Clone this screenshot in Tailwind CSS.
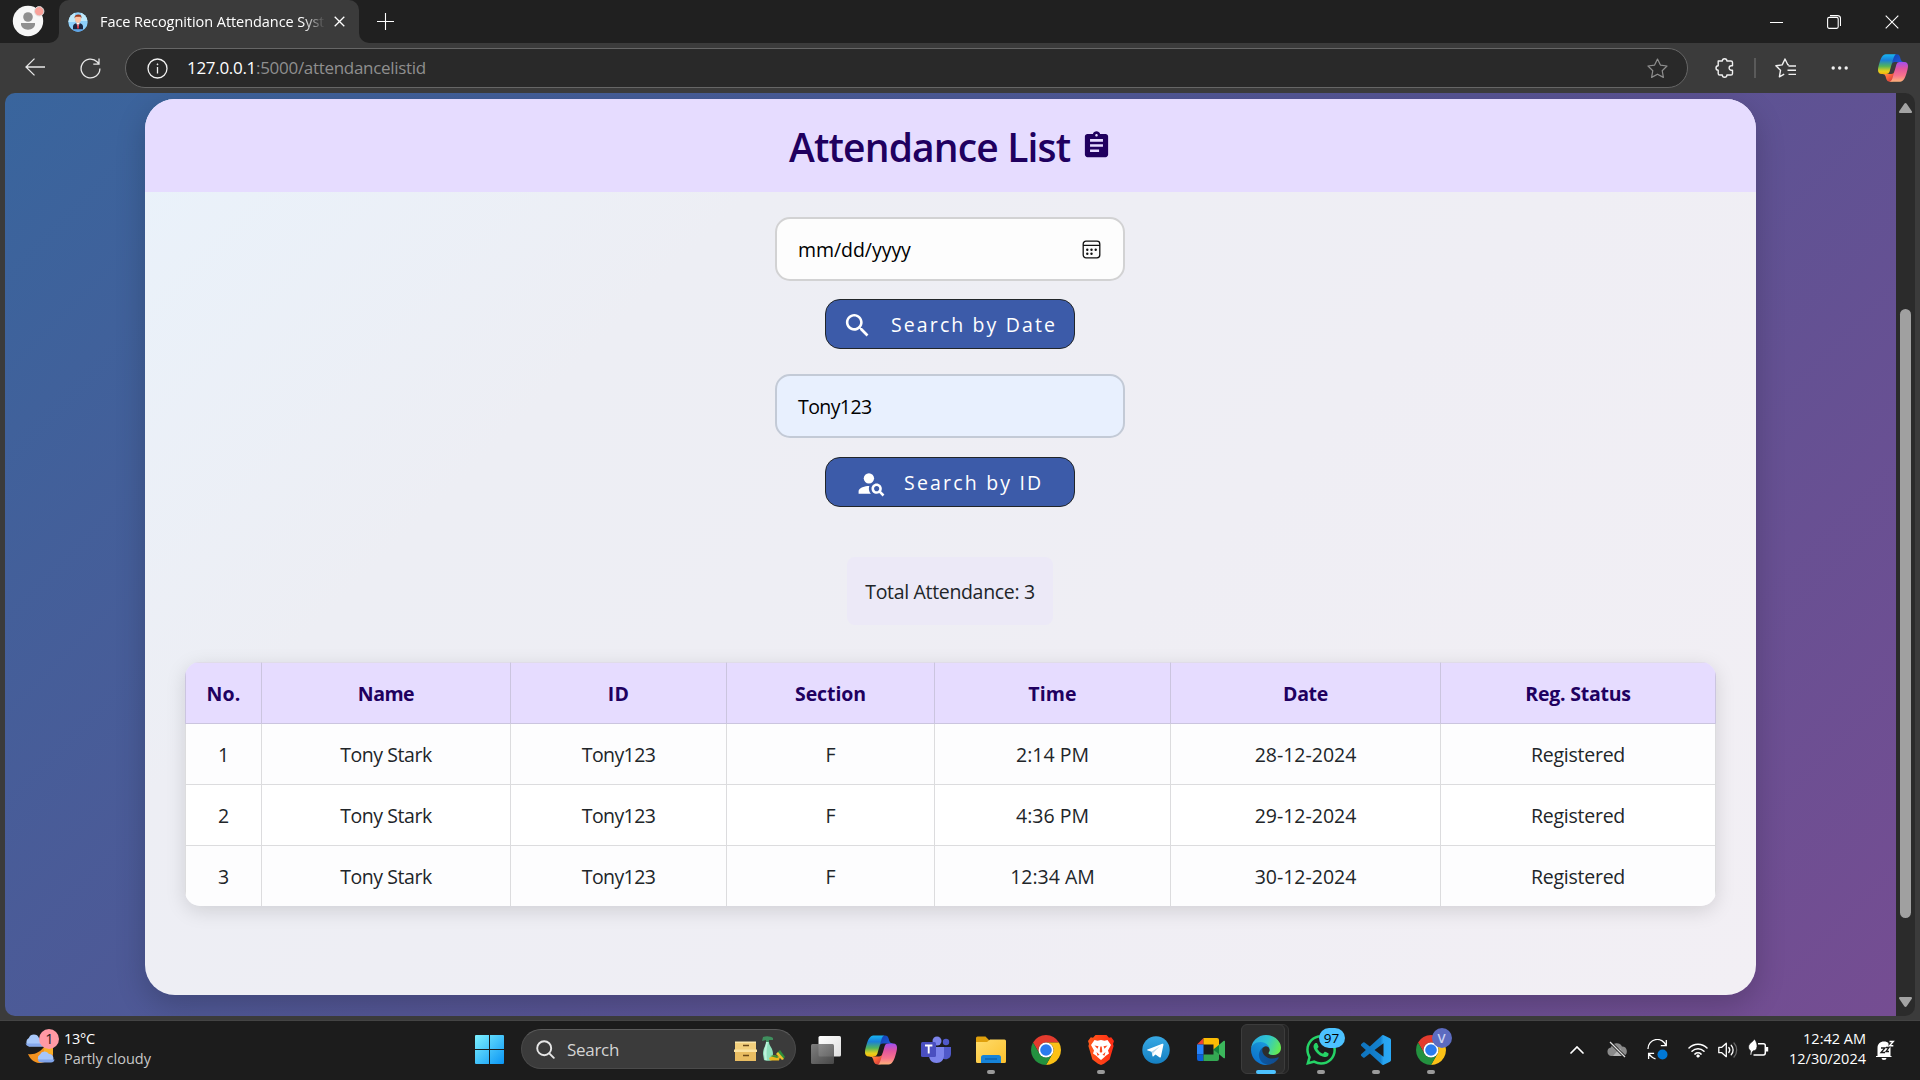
<!DOCTYPE html>
<html lang="en">
<head>
<meta charset="utf-8">
<title>Face Recognition Attendance System</title>
<script src="https://cdn.jsdelivr.net/npm/@tailwindcss/browser@4"></script>
</head>
<body class="w-[1920px] h-[1080px] overflow-hidden bg-[#3b3b3b] font-['Open_Sans',sans-serif] flex flex-col">

<!-- Shared gradients and logos -->
<svg class="absolute w-0 h-0" aria-hidden="true">
  <defs>
    <linearGradient id="cpA" x1="0" y1="0" x2="0" y2="1"><stop offset="0" stop-color="#18b5f2"/><stop offset=".3" stop-color="#1a7fd8"/><stop offset=".6" stop-color="#52b45a"/><stop offset=".85" stop-color="#e8cf1c"/><stop offset="1" stop-color="#f6b60c"/></linearGradient>
    <linearGradient id="cpB" x1="0" y1="0" x2="0" y2="1"><stop offset="0" stop-color="#a24ff0"/><stop offset=".35" stop-color="#e2569e"/><stop offset=".7" stop-color="#f8738c"/><stop offset="1" stop-color="#fdb27a"/></linearGradient>
    <linearGradient id="cpC" x1="0" y1="0" x2="1" y2="1"><stop offset="0" stop-color="#0f3fae"/><stop offset="1" stop-color="#2764e7"/></linearGradient>
    <linearGradient id="cpD" x1="0" y1="0" x2="1" y2="1"><stop offset="0" stop-color="#ffb657"/><stop offset=".5" stop-color="#ff6a3c"/><stop offset="1" stop-color="#c02b3c"/></linearGradient>
    <linearGradient id="edA" x1="0" y1="0" x2="1" y2="0"><stop offset="0" stop-color="#0c59a4"/><stop offset="1" stop-color="#114a8b"/></linearGradient>
    <linearGradient id="edB" x1=".8" y1="0" x2=".3" y2="1"><stop offset="0" stop-color="#1b9de2"/><stop offset=".5" stop-color="#1384cf"/><stop offset="1" stop-color="#0a6fd0"/></linearGradient>
    <linearGradient id="edC" x1="0" y1=".3" x2="1" y2=".6"><stop offset="0" stop-color="#2aa9e0"/><stop offset=".5" stop-color="#2fc6cf"/><stop offset="1" stop-color="#66eb4e"/></linearGradient>
    <linearGradient id="win" x1="0" y1="0" x2="1" y2="1"><stop offset="0" stop-color="#7df1ff"/><stop offset="1" stop-color="#0a95f5"/></linearGradient>
    <linearGradient id="fold" x1="0" y1="0" x2="1" y2="1"><stop offset="0" stop-color="#ffdc6b"/><stop offset="1" stop-color="#fbc02d"/></linearGradient>
    <linearGradient id="tg" x1="0" y1="0" x2="0" y2="1"><stop offset="0" stop-color="#38a9e4"/><stop offset="1" stop-color="#1580c2"/></linearGradient>
    <linearGradient id="br" x1="0" y1="0" x2="1" y2="0"><stop offset="0" stop-color="#ff5a1c"/><stop offset="1" stop-color="#ff2a14"/></linearGradient>
    <linearGradient id="vs" x1="0" y1="0" x2="1" y2="0"><stop offset="0" stop-color="#0f73bd"/><stop offset=".65" stop-color="#1482cf"/><stop offset=".75" stop-color="#27a3f0"/><stop offset="1" stop-color="#2aa8f5"/></linearGradient>
    <linearGradient id="tv1" x1="0" y1="0" x2="1" y2="1"><stop offset="0" stop-color="#ffffff"/><stop offset="1" stop-color="#dedede"/></linearGradient>
    <linearGradient id="tv2" x1="0" y1="0" x2="1" y2="1"><stop offset="0" stop-color="#8a8a8a"/><stop offset="1" stop-color="#4c4c4c"/></linearGradient>
    <symbol id="copilot" viewBox="2 2 44 44">
      <path fill="url(#cpC)" d="M34.142 7.325A4.63 4.63 0 0 0 29.7 4H28.35a4.63 4.63 0 0 0-4.554 3.794L21.48 20.407l.575-1.965a4.63 4.63 0 0 1 4.444-3.33h7.853l3.294 1.282 3.175-1.283h-.926a4.63 4.63 0 0 1-4.443-3.325l-1.31-4.461Z"/>
      <path fill="url(#cpD)" d="M14.33 40.656A4.63 4.63 0 0 0 18.779 44h2.87a4.63 4.63 0 0 0 4.629-4.51l.312-12.163-.654 2.233a4.63 4.63 0 0 1-4.443 3.329h-7.919l-2.823-1.532-3.057 1.532h.912a4.63 4.63 0 0 1 4.447 3.344l1.279 4.423Z"/>
      <path fill="url(#cpA)" d="M29.5 4H13.46c-4.583 0-7.332 6.057-9.165 12.113C2.123 23.29-.72 32.885 7.503 32.885h6.925a4.63 4.63 0 0 0 4.456-3.358 2077.617 2077.617 0 0 1 4.971-17.156c.843-2.843 1.544-5.284 2.621-6.805C27.08 4.714 28.086 4 29.5 4Z"/>
      <path fill="url(#cpB)" d="M18.498 44h16.04c4.582 0 7.332-6.058 9.165-12.115 2.171-7.177 5.013-16.775-3.208-16.775h-6.926a4.63 4.63 0 0 0-4.455 3.358 2084.036 2084.036 0 0 1-4.972 17.16c-.842 2.842-1.543 5.283-2.62 6.804-.603.852-1.61 1.568-3.024 1.568Z"/>
    </symbol>
    <symbol id="chrome" viewBox="0 0 48 48">
      <path fill="#e33b2e" d="M24 12H44.78A24 24 0 0 0 3.22 12L13.61 30A12 12 0 0 1 24 12Z"/>
      <path fill="#fbc116" transform="rotate(120 24 24)" d="M24 12H44.78A24 24 0 0 0 3.22 12L13.61 30A12 12 0 0 1 24 12Z"/>
      <path fill="#23913f" transform="rotate(240 24 24)" d="M24 12H44.78A24 24 0 0 0 3.22 12L13.61 30A12 12 0 0 1 24 12Z"/>
      <circle cx="24" cy="24" r="12" fill="#fff"/><circle cx="24" cy="24" r="9.3" fill="#2a7bee"/>
    </symbol>
  </defs>
</svg>

<!-- Tab strip -->
<div class="h-[43px] flex-none flex items-stretch bg-[#202020] text-white">
  <div class="w-[59px] flex items-center relative">
    <div class="absolute right-0 bottom-0 size-[10px] bg-[#3b3b3b]"></div>
    <div class="absolute right-0 bottom-0 size-[10px] bg-[#202020] rounded-br-[10px]"></div>
    <svg class="ml-[12px] -mt-0.5 size-[33px]" viewBox="0 0 33 33"><circle cx="16" cy="17" r="15.2" fill="#f7f7f7"/><circle cx="16" cy="13" r="4.8" fill="#8f8f8f"/><path d="M9 19h14v1.3c0 3-3 5.4-7 5.4s-7-2.400-7-5.400z" fill="#8f8f8f"/><circle cx="27.200" cy="7.300" r="4.700" fill="#f9a19a" stroke="#dedede" stroke-width="1"/></svg>
  </div>
  <div class="w-[300px] flex items-center bg-[#3b3b3b] rounded-t-[10px] pl-[9px]">
    <svg class="size-5 mt-px" viewBox="0 0 20 20"><clipPath id="fav"><circle cx="10" cy="10" r="9.700"/></clipPath><g clip-path="url(#fav)"><rect width="20" height="20" fill="#8ed0fb"/><path d="M0 0h7v10H0zM13 0h7v9h-7z" fill="#bfe9fb"/><path d="M5 17.500v-3c0-2 2-3.500 5-3.500s5 1.500 5 3.500v3z" fill="#1c2742"/><path d="M8.300 11h3.400L10 16z" fill="#fff"/><path d="M9.500 12h1l.5 4-1 1-1-1z" fill="#dc3545"/><ellipse cx="10" cy="7" rx="3" ry="4" fill="#fcc3a5"/><path d="M6.600 6.500c-.3-3 1.300-4 3.700-4 2.700 0 3.500 1.500 3.100 4l-.9-1.700H7.600z" fill="#9c3a1c"/><path d="M3 17.500h14V20H3z" fill="#5aa3e8"/></g></svg>
    <div class="ml-[12px] w-[226px] h-[22px] whitespace-nowrap leading-[22px] text-[14.500px] tracking-[-0.06px] [mask-image:linear-gradient(90deg,#000_203px,transparent_225px)]">Face Recognition Attendance Syst</div>
    <svg class="ml-[8px] size-[11px]" viewBox="0 0 11 11"><path d="M.7.7l9.600 9.600M10.300.7L.7 10.300" stroke="#fff" stroke-width="1.300"/></svg>
  </div>
  <div class="w-[53px] flex items-center pl-[18px] relative">
    <div class="absolute left-0 bottom-0 size-[10px] bg-[#3b3b3b]"></div>
    <div class="absolute left-0 bottom-0 size-[10px] bg-[#202020] rounded-bl-[10px]"></div>
    <svg class="size-[17px] -mt-px" viewBox="0 0 17 17"><path d="M8.500 0v17M0 8.500h17" stroke="#fff" stroke-width="1.100"/></svg>
  </div>
  <div class="ml-auto flex items-center gap-[44px] pr-[21px]">
    <svg class="w-[13px] h-[14px]" viewBox="0 0 13 14"><path d="M0 7.500h13" stroke="#fff"/></svg>
    <svg class="size-[14px]" viewBox="0 0 14 14" fill="none" stroke="#fff" stroke-width="1.100"><rect x=".6" y="2.400" width="10.600" height="11" rx="1.600"/><path d="M3 .6h7.500a3 3 0 0 1 3 3V11"/></svg>
    <svg class="size-[14px]" viewBox="0 0 14 14"><path d="M.7.7l12.600 12.600M13.300.7L.7 13.300" stroke="#fff" stroke-width="1.100"/></svg>
  </div>
</div>

<!-- Toolbar -->
<div class="h-[50px] flex-none flex items-center bg-[#3b3b3b]">
  <svg class="ml-[25px] w-5 h-[18px] -mt-0.5" viewBox="0 0 20 18" fill="none" stroke="#e8e8e8" stroke-width="1.300"><path d="M20 9H1M9.500.6L1 9l8.500 8.400"/></svg>
  <svg class="ml-[35px] size-[21px]" viewBox="0 0 21 21" fill="none" stroke="#e8e8e8" stroke-width="1.300"><path d="M19.900 10.500a9.400 9.400 0 1 1-2.600-6.500l1.500 1.800M19 .5v5.700h-5.700"/></svg>
  <div class="ml-[24px] w-[1563px] h-10 rounded-full border border-[#666] bg-[#292929] flex items-center pl-[21px] pr-[19px]">
    <svg class="size-[21px]" viewBox="0 0 21 21" fill="none" stroke="#f2f2f2" stroke-width="1.300"><circle cx="10.500" cy="10.500" r="9.500"/><path d="M10.500 9v6.500" /><circle cx="10.500" cy="6.300" r=".6" fill="#f2f2f2" stroke-width=".6"/></svg>
    <span class="ml-[19px] -mt-px text-[17px] leading-6 text-[#8f8f8f] tracking-[-0.3px] whitespace-nowrap"><b class="font-normal text-white">127.0.0.1</b>:5000/attendancelistid</span>
    <svg class="ml-auto size-[21px]" viewBox="0 0 21 21" fill="none" stroke="#8f8f8f" stroke-width="1.200" stroke-linejoin="round"><path d="M10.500 1l2.900 6.100 6.600.9-4.800 4.700 1.200 6.700-5.900-3.200-5.900 3.200 1.200-6.700L1 8l6.600-.9z"/></svg>
  </div>
  <svg class="ml-[27px] size-[20px]" viewBox="0 0 20 20" fill="none" stroke="#f0f0f0" stroke-width="1.400" stroke-linejoin="round"><path d="M3.200 3h4.100a2.300 2.300 0 0 1 4.600 0h4a1.600 1.600 0 0 1 1.600 1.600V7.800h-1.200a2.200 2.200 0 0 0 0 4.400h1.200v3.200a1.600 1.600 0 0 1-1.600 1.600h-4a2.300 2.300 0 0 1-4.600 0H4.800a1.600 1.600 0 0 1-1.600-1.600v-3.200a2.200 2.200 0 0 1 0-4.400z"/></svg>
  <div class="ml-[19px] w-[2px] h-5 bg-[#5a5a5a]"></div>
  <svg class="ml-[19px] size-[21px]" viewBox="0 0 21 21" fill="none" stroke="#f0f0f0" stroke-width="1.400" stroke-linejoin="round"><path d="M14 6.900l-1.200-.2L10 1 7.200 6.900.9 7.800l4.600 4.500-1.100 6.500 4.800-2.600M13.500 8H21M12.500 12.200H21M13.500 16.400H21"/></svg>
  <svg class="ml-[35px] w-[18px] h-1" viewBox="0 0 18 4" fill="#f0f0f0"><circle cx="2.200" cy="2" r="1.700"/><circle cx="8.700" cy="2" r="1.700"/><circle cx="15.200" cy="2" r="1.700"/></svg>
  <svg class="ml-[29px] size-[30px]"><use href="#copilot"/></svg>
</div>

<!-- Page viewport -->
<div class="h-[923px] flex-none flex ml-[5px] mr-[5px] rounded-[10px] overflow-hidden">
  <main class="w-[1891px] pl-[140px] pt-[6px] bg-[linear-gradient(135deg,#39659d_0%,#575494_52%,#754d92_100%)]">
    <section class="w-[1611px] h-[896px] rounded-[30px] shadow-[0_10px_30px_rgba(0,0,0,0.2)] bg-[linear-gradient(135deg,#e9f2fb_0%,#edeef4_28%,#efeef4_60%,#f2eff4_100%)] flex flex-col items-center text-[#212529]">
      <header class="w-full h-[93px] rounded-t-[30px] bg-[#e6dcff] text-[#20005f] flex pl-[644px]">
        <h1 class="mt-[20px] leading-[56px] text-[39px] font-semibold tracking-[-0.85px] whitespace-nowrap w-[292px]">Attendance List</h1>
        <svg class="mt-[31px] size-[31px]" viewBox="0 0 24 24" fill="currentColor"><path d="M19 3h-4.180C14.400 1.840 13.300 1 12 1c-1.300 0-2.400.840-2.820 2H5c-1.100 0-2 .9-2 2v14c0 1.100.9 2 2 2h14c1.100 0 2-.9 2-2V5c0-1.100-.9-2-2-2zm-7 0c.550 0 1 .450 1 1s-.450 1-1 1-1-.450-1-1 .450-1 1-1zm2 14H7v-2h7v2zm3-4H7v-2h10v2zm0-4H7V7h10v2z"/></svg>
      </header>
      <div class="mt-[25px] mr-px w-[350px] h-16 rounded-[15px] border-2 border-[#d2d2d3] bg-[#fdfdfd] flex items-center pl-[21px] pr-[22px] text-black">
        <span class="pt-[2px] text-[19.500px] leading-7 whitespace-nowrap tracking-[-0.05px]">mm/dd/yyyy</span>
        <svg class="ml-auto size-[19px]" viewBox="0 0 19 19"><rect x="1.200" y="1.200" width="16.600" height="16.600" rx="2.800" fill="none" stroke="#111" stroke-width="1.300"/><path d="M1 5.300h17" stroke="#111" stroke-width="1.300"/><g fill="#111"><circle cx="5.300" cy="9.700" r="1.200"/><circle cx="9.500" cy="9.700" r="1.200"/><circle cx="13.700" cy="9.700" r="1.200"/><circle cx="5.300" cy="13.700" r="1.200"/><circle cx="9.500" cy="13.700" r="1.200"/></g></svg>
      </div>
      <button class="mt-[18px] mr-px w-[250px] h-[50px] rounded-[15px] border border-[#212529] bg-[#3c5ba9] text-white flex items-center pl-[16px]">
        <svg class="mt-[2px] size-[31px]" viewBox="0 0 24 24" fill="currentColor"><path d="M15.500 14h-.790l-.280-.270C15.410 12.590 16 11.110 16 9.500 16 5.910 13.090 3 9.500 3S3 5.910 3 9.500 5.910 16 9.500 16c1.610 0 3.090-.590 4.230-1.570l.270.280v.790l5 4.990L20.490 19l-4.990-5zm-6 0C7.010 14 5 11.990 5 9.500S7.010 5 9.500 5 14 7.010 14 9.500 11.990 14 9.500 14z"/></svg>
        <span class="ml-[18px] pt-px text-[19.500px] tracking-[2.110px] whitespace-nowrap">Search by Date</span>
      </button>
      <div class="mt-[25px] mr-px w-[350px] h-16 rounded-[15px] border-2 border-[#c3cad6] bg-[#e8f0fe] flex items-center pl-[21px] text-black">
        <span class="pt-[2px] text-[19.500px] leading-7 tracking-[-0.590px] whitespace-nowrap">Tony123</span>
      </div>
      <button class="mt-[19px] mr-px w-[250px] h-[50px] rounded-[15px] border border-[#212529] bg-[#3c5ba9] text-white flex items-center pl-[30px]">
        <svg class="size-[31px] mt-0.5" viewBox="0 0 24 24" fill="currentColor"><circle cx="10" cy="8" r="4"/><path d="M10.350 14.010C7.620 13.910 2 15.270 2 18v2h9.540c-2.470-2.760-1.230-5.890-1.190-5.990z"/><path d="M19.430 18.020c.360-.590.570-1.280.570-2.020 0-2.210-1.790-4-4-4s-4 1.790-4 4 1.790 4 4 4c.740 0 1.430-.220 2.020-.570L20.590 22 22 20.590l-2.570-2.570zM16 18c-1.100 0-2-.9-2-2s.9-2 2-2 2 .9 2 2-.9 2-2 2z"/></svg>
        <span class="ml-[17px] pt-px text-[19.500px] tracking-[2.190px] whitespace-nowrap">Search by ID</span>
      </button>
      <div class="mt-[50px] mr-px w-[206px] h-[68px] rounded-[8px] bg-[#ece9f7] flex items-center justify-center text-[19.500px] tracking-[-0.330px] pt-[2px] whitespace-nowrap">Total Attendance: 3</div>

      <div class="mt-[37px] w-[1531px] h-[244px] rounded-[15px] overflow-hidden shadow-[0_5px_20px_rgba(0,0,0,0.13)]">
        <table class="w-[1531px] table-fixed border-separate border-spacing-0 text-center text-[19.500px] leading-7 whitespace-nowrap">
          <colgroup><col class="w-[77px]"><col class="w-[249px]"><col class="w-[216px]"><col class="w-[208px]"><col class="w-[236px]"><col class="w-[270px]"><col class="w-[275px]"></colgroup>
          <thead class="bg-[#e6dcff] text-[#20005f]">
            <tr class="h-[62px] *:border-b *:border-r *:border-[#cbc5df] *:border-t *:border-t-[#e0dce8] *:font-bold *:pt-[2px] *:first:border-l">
              <th class="tracking-[0.200px]">No.</th><th class="tracking-[-0.500px]">Name</th><th class="tracking-[0.400px]">ID</th><th class="tracking-[-0.080px]">Section</th><th class="tracking-[0.100px]">Time</th><th class="tracking-[-0.300px]">Date</th><th class="tracking-[-0.230px]">Reg. Status</th>
            </tr>
          </thead>
          <tbody>
            <tr class="h-[61px] bg-[#fdfdfe] *:border-b *:border-r *:border-[#dcdcde] *:pt-[2px] *:first:border-l"><td>1</td><td class="tracking-[-0.450px]">Tony Stark</td><td class="tracking-[-0.590px]">Tony123</td><td>F</td><td>2:14 PM</td><td>28-12-2024</td><td class="tracking-[-0.250px]">Registered</td></tr>
            <tr class="h-[61px] bg-white *:border-b *:border-r *:border-[#dcdcde] *:pt-[2px] *:first:border-l"><td>2</td><td class="tracking-[-0.450px]">Tony Stark</td><td class="tracking-[-0.590px]">Tony123</td><td>F</td><td>4:36 PM</td><td>29-12-2024</td><td class="tracking-[-0.250px]">Registered</td></tr>
            <tr class="h-[60px] bg-[#fdfdfe] *:border-r *:border-[#dcdcde] *:pt-[2px] *:first:border-l"><td>3</td><td class="tracking-[-0.450px]">Tony Stark</td><td class="tracking-[-0.590px]">Tony123</td><td>F</td><td>12:34 AM</td><td>30-12-2024</td><td class="tracking-[-0.250px]">Registered</td></tr>
          </tbody>
        </table>
      </div>
    </section>
  </main>
  <!-- Scrollbar -->
  <div class="w-[19px] bg-[#2b2b2b] flex flex-col items-center pt-[10px] pb-[9px]">
    <svg class="w-[13px] h-[10px]" viewBox="0 0 13 10" fill="#a3a3a3"><path d="M5.300.8a1.500 1.500 0 0 1 2.400 0L12.800 8.300a1 1 0 0 1-.9 1.600H1.100A1 1 0 0 1 .2 8.300z"/></svg>
    <div class="mt-[196px] w-[11px] h-[609px] rounded-full bg-[#a0a0a0]"></div>
    <svg class="mt-auto w-[13px] h-[10px]" viewBox="0 0 13 10" fill="#a3a3a3"><path d="M5.300 9.200a1.500 1.500 0 0 0 2.400 0L12.800 1.700a1 1 0 0 0-.9-1.600H1.100A1 1 0 0 0 .2 1.700z"/></svg>
  </div>
</div>

<!-- Taskbar -->
<div class="mt-[4px] h-[60px] flex-none flex items-center bg-[#1c1c1c] border-t border-[#444] text-white">
  <div class="w-[462px] flex items-center pl-[24px]">
    <svg class="w-[36px] h-[36px] -mt-[9px]" viewBox="0 0 36 36"><path d="M4 26c7 1 12-2 17-8h8v9c-3 6-9 8-14 8-5-.5-9-4-11-9z" fill="#f3921f"/><path d="M20 19c3-1 6-1 9-1v8h-9z" fill="#f9ae28"/><path d="M5 18.500a4.800 4.800 0 0 1-.2-8.500A5.500 5.500 0 0 1 15 10l4 8.500z" fill="#a8c8fa"/><path d="M5 18.500a4.800 4.800 0 0 1-3.500-3h17v3z" fill="#86a9ec"/><path d="M17 34a4 4 0 0 1-1-7.500 5 5 0 0 1 9-.5 4.200 4.200 0 0 1 2 8z" fill="#a6c6fb"/><path d="M17 34.500a4 4 0 0 1-3.400-3h17c-.5 2-1.500 3-3.600 3z" fill="#80a4ea"/><circle cx="25" cy="11" r="10" fill="#ff99a4"/><text x="25.500" y="16" font-size="14.500" text-anchor="middle" fill="#1c1c1c">1</text></svg>
    <div class="ml-[4px] -mt-[3px] text-[14.500px] leading-5 whitespace-nowrap"><div class="tracking-[-0.230px]">13°C</div><div class="text-[#c8c8c8]">Partly cloudy</div></div>
  </div>
  <div class="w-[59px] flex pl-[13px]"><svg class="size-[29px] -mt-0.5" viewBox="0 0 29 29" fill="url(#win)"><path d="M0 1a1 1 0 0 1 1-1h13v14H0zM15 0h13a1 1 0 0 1 1 1v13H15zM0 15h14v14H1a1 1 0 0 1-1-1zM15 15h14v13a1 1 0 0 1-1 1H15z"/></svg></div>
  <div class="w-[275px] h-10 -mt-[3px] rounded-full bg-[#3b3b3b] border border-[#4a4a4a] border-t-[#5c5c5c] flex items-center pl-[14px] text-[#d4d4d4]">
    <svg class="size-[19px]" viewBox="0 0 19 19" fill="none" stroke="#e6e6e6" stroke-width="1.900" stroke-linecap="round"><circle cx="8.200" cy="8.200" r="7"/><path d="M13.300 13.300l4.500 4.500"/></svg>
    <span class="ml-[12px] pt-px text-[17px] leading-6 tracking-[-0.300px]">Search</span>
    <svg class="ml-auto mr-[9px] w-[54px] h-[26px]" viewBox="0 0 54 26"><path d="M3 6h21v8H3z" fill="#f2cf7c"/><path d="M3 5.500h21v1.600H3z" fill="#fbe6a8"/><rect x="3" y="14" width="21" height="11" fill="#e9bd62"/><path d="M2 13.500h23v2.500H2z" fill="#fbe2a0"/><path d="M11 9.500h6M11 19.500h6" stroke="#6b4a1a" stroke-width="1.500"/><path d="M31 1c4-1.500 8-.5 10 1v2h-4v3h-3V4l-4 1z" fill="#3f8f5e"/><path d="M34 6h3c0 4 4 6 4 12l-1 6c-1 1-7 1-8 0l-1-6c0-6 3-8 3-12z" fill="#8fe0bb"/><path d="M34 6h2c-1 5-2 9-1 18h-2l-1-6c0-6 2-8 2-12z" fill="#bdf2dc"/><path d="M37 22l5-3 6 2-1 3.500h-9z" fill="#e9b820"/><path d="M38 20l5-1 4 2-2 1z" fill="#3e8e32"/><path d="M45 17l3-3 5 7-2 2z" fill="#2f8f3d"/><path d="M44 18l2-2 6 7-2 1z" fill="#f0c22c"/></svg>
  </div>
  <div class="ml-[2.500px] flex h-full items-center *:w-[55px] *:h-full *:flex *:items-center *:justify-center *:relative *:pb-[2px]">
    <div><svg class="w-[30px] h-[28px]" viewBox="0 0 30 28"><rect x="7.500" y="0" width="22.500" height="20.500" rx="1.500" fill="url(#tv1)"/><rect x="0" y="8" width="23" height="20" rx="1.500" fill="url(#tv2)" fill-opacity=".9"/></svg></div>
    <div><svg class="size-[32px]"><use href="#copilot"/></svg></div>
    <div><svg class="w-[30px] h-[28px]" viewBox="0 0 30 28"><circle cx="16" cy="5" r="4.500" fill="#7b83eb"/><circle cx="25" cy="6" r="3.200" fill="#5059c9"/><path d="M21 11h9v7a5.500 5.500 0 0 1-9 4z" fill="#5059c9"/><path d="M8 11h15v8c0 5-3 8-7.500 8S8 24 8 19z" fill="#7b83eb"/><rect y="6" width="15" height="15" rx="1.500" fill="#4a4fc0"/><path d="M4 9.500h7.400M7.700 9.500v8" stroke="#fff" stroke-width="1.900"/></svg></div>
    <div><svg class="w-[30px] h-[27px]" viewBox="0 0 30 27"><path d="M0 2a1.500 1.500 0 0 1 1.500-1.500h8L13 4v4H0z" fill="#e0a00c"/><path d="M0 6h11l3-2.500h14.500A1.500 1.500 0 0 1 30 5v20.500a1.500 1.500 0 0 1-1.500 1.500h-27A1.500 1.500 0 0 1 0 25.500z" fill="url(#fold)"/><path d="M5 27v-5.500A2.500 2.500 0 0 1 7.500 19h15a2.500 2.500 0 0 1 2.500 2.500V27z" fill="#1683d8"/><path d="M9 23h12" stroke="#0a5ca8" stroke-width="1.200"/></svg><i class="absolute bottom-[6px] w-2 h-1 rounded-full bg-[#9a9a9a]"></i></div>
    <div><svg class="size-[30px]"><use href="#chrome"/></svg></div>
    <div><svg class="w-[26px] h-[30px]" viewBox="0 0 26 30"><path d="M7.500 0h11l2.500 2.700 2.200-.4L26 6l-1 3 .6 2-4 13.500L16 28.800 13 30l-3-1.200-5.600-4.300L.4 11 1 9 0 6l2.800-3.700 2.200.4z" fill="url(#br)"/><path d="M6.500 5l3 .7L13 5l3.500.7 3-.7 3.500 5-3 5.500 1 3-3.500 2.500-1.500 1.500L13 25l-3-2.500L8.500 21 5 18.500l1-3L3 10z" fill="#fff"/><path d="M6.500 10.500l4 .8-1 2.500zM19.500 10.500l-4 .8 1 2.500zM12.300 11.500h1.400l.6 5L13 18l-1.300-1.500zM8.500 17l3 2.700-2 1zM17.500 17l-3 2.700 2 1z" fill="#fb4a20"/></svg><i class="absolute bottom-[6px] w-2 h-1 rounded-full bg-[#9a9a9a]"></i></div>
    <div><svg class="size-[28px]" viewBox="0 0 28 28"><circle cx="14" cy="14" r="13.700" fill="url(#tg)"/><path d="M5.500 13.600L20.300 7.800c.8-.3 1.300.2 1.100 1.200l-2.500 11.700c-.2.900-.8 1-1.500.6l-3.900-2.900-2 1.900c-.5.500-.9.300-1-.3l-.9-4.300-3.900-1.200c-.8-.3-.8-.7-.2-.9z" fill="#fff"/><path d="M9.900 15.500l8-5.200-6.600 6.500-.3 2.700z" fill="#b5d6ea"/></svg></div>
    <div><svg class="w-[28px] h-[23px]" viewBox="0 0 28 23"><path d="M6.500 0v6.500H0z" fill="#ea4335"/><path d="M6.500 0H20a2 2 0 0 1 2 2v7l-5.500 2.500v-5h-10z" fill="#fbbc04"/><path d="M0 6.500h6.500v10H0z" fill="#2684fc"/><path d="M0 16.500h6.500V23H2a2 2 0 0 1-2-2z" fill="#0a5fd9"/><path d="M6.500 16.500h10v-5L22 16v5a2 2 0 0 1-2 2H6.500z" fill="#34a853"/><path d="M16.500 11.500L26.500 3c.8-.7 1.500-.3 1.500.6v15.800c0 .9-.7 1.300-1.500.6z" fill="#3bb75c"/><path d="M16.500 11.500L22 7v9z" fill="#11823b"/></svg></div>
    <div><b class="absolute left-[8px] top-[3px] w-[42px] h-[50px] rounded-[6px] bg-[#242424] border border-[#353535]"></b><b class="absolute left-[2px] top-[3px] w-[44px] h-[50px] rounded-[6px] bg-[#2d2d2d] border border-[#3c3c3c]"></b><svg class="size-[30px] relative" viewBox="0 0 256 256"><path fill="url(#edA)" d="M231.110 190.240a93.670 93.670 0 0 1-10.540 4.710 101.870 101.870 0 0 1-35.900 6.460c-47.320 0-88.540-32.550-88.540-74.320 0-11.400 6.400-21.900 16.480-27.460-42.800 1.800-53.800 46.400-53.800 72.530 0 73.880 68.090 81.370 82.760 81.370 7.910 0 19.840-2.300 27-4.560l1.310-.440a128.340 128.340 0 0 0 66.600-52.800 4 4 0 0 0-5.370-5.490z"/><path fill="url(#edB)" d="M105.730 241.420a79.200 79.200 0 0 1-22.740-21.340 80.720 80.720 0 0 1 29.530-120.430c3.120-1.470 8.450-4.130 15.540-4a32.350 32.350 0 0 1 25.690 13 31.880 31.880 0 0 1 6.360 18.660c0-.210 24.460-79.600-80-79.600-43.900 0-80 41.660-80 78.210a130.150 130.150 0 0 0 12.110 56 128 128 0 0 0 156.380 67.110 75.550 75.550 0 0 1-62.780-8z"/><path fill="url(#edC)" d="M152.330 148.860c-.810 1.050-3.300 2.500-3.300 5.660 0 2.610 1.700 5.120 4.720 7.230 14.380 10 41.490 8.680 41.560 8.680a59.560 59.560 0 0 0 30.270-8.350 61.380 61.380 0 0 0 30.430-52.880c.260-22.410-8-37.310-11.340-43.910C223.460 23.840 177.720 0 128 0A128 128 0 0 0 0 126.200c.480-36.540 36.800-66.050 80-66.050 3.500 0 23.460.340 42 10.070 16.340 8.580 24.900 18.940 30.850 29.210 6.180 10.670 7.280 24.150 7.280 29.520s-2.740 13.330-7.800 19.910z"/></svg><i class="absolute bottom-[6px] w-5 h-1 rounded-full bg-[#4cc2ff]"></i></div>
    <div><svg class="size-[30px]" viewBox="0 0 24 24" fill="#25d366"><path d="M17.472 14.382c-.297-.149-1.758-.867-2.030-.967-.273-.099-.471-.148-.670.150-.197.297-.767.966-.940 1.164-.173.199-.347.223-.644.075-.297-.150-1.255-.463-2.390-1.475-.883-.788-1.480-1.761-1.653-2.059-.173-.297-.018-.458.130-.606.134-.133.298-.347.446-.520.149-.174.198-.298.298-.497.099-.198.050-.371-.025-.520-.075-.149-.669-1.612-.916-2.207-.242-.579-.487-.5-.669-.510-.173-.008-.371-.010-.570-.010-.198 0-.520.074-.792.372-.272.297-1.040 1.016-1.040 2.479 0 1.462 1.065 2.875 1.213 3.074.149.198 2.096 3.200 5.077 4.487.709.306 1.262.489 1.694.625.712.227 1.360.195 1.871.118.571-.085 1.758-.719 2.006-1.413.248-.694.248-1.289.173-1.413-.074-.124-.272-.198-.570-.347m-5.421 7.403h-.004a9.870 9.870 0 01-5.031-1.378l-.361-.214-3.741.982.998-3.648-.235-.374a9.860 9.860 0 01-1.510-5.260c.001-5.450 4.436-9.884 9.888-9.884 2.640 0 5.122 1.030 6.988 2.898a9.825 9.825 0 012.893 6.994c-.003 5.450-4.437 9.884-9.885 9.884m8.413-18.297A11.815 11.815 0 0012.050 0C5.495 0 .160 5.335.157 11.892c0 2.096.547 4.142 1.588 5.945L.057 24l6.305-1.654a11.882 11.882 0 005.683 1.448h.005c6.554 0 11.890-5.335 11.893-11.893a11.821 11.821 0 00-3.480-8.413z"/></svg><span class="absolute left-[25px] top-[7px] w-[26px] h-5 rounded-full bg-[#4cc2ff] text-black text-[13.500px] leading-[21px] text-center">97</span><i class="absolute bottom-[6px] w-2 h-1 rounded-full bg-[#9a9a9a]"></i></div>
    <div><svg class="size-[30px]" viewBox="0 0 24 24" fill="url(#vs)"><path d="M23.150 2.587L18.210.210a1.494 1.494 0 0 0-1.705.290l-9.460 8.630-4.120-3.128a.999.999 0 0 0-1.276.057L.327 7.261A1 1 0 0 0 .326 8.740L3.899 12 .326 15.260a1 1 0 0 0 .001 1.479L1.650 17.940a.999.999 0 0 0 1.276.057l4.120-3.128 9.460 8.630a1.492 1.492 0 0 0 1.704.290l4.942-2.377A1.500 1.500 0 0 0 24 20.060V3.939a1.500 1.500 0 0 0-.850-1.352zm-5.146 14.861L10.826 12l7.178-5.448v10.896z"/></svg><i class="absolute bottom-[6px] w-2 h-1 rounded-full bg-[#9a9a9a]"></i></div>
    <div><svg class="size-[30px]"><use href="#chrome"/></svg><span class="absolute left-[28px] top-[7px] size-5 rounded-full bg-[#5c6bc0] text-[#cdd3f2] text-[13px] font-semibold leading-5 text-center">V</span><i class="absolute bottom-[6px] w-2 h-1 rounded-full bg-[#9a9a9a]"></i></div>
  </div>
  <!-- System tray -->
  <div class="ml-auto -mt-[2px] flex items-center pr-[25px]">
    <svg class="w-[14px] h-2" viewBox="0 0 14 8" fill="none" stroke="#fff" stroke-width="1.700" stroke-linecap="round"><path d="M1 7l6-6 6 6"/></svg>
    <svg class="ml-[23px] w-5 h-[17px]" viewBox="0 0 20 17"><path d="M4.500 15a4.300 4.300 0 0 1-.6-8.500A6 6 0 0 1 15 5.500a4.800 4.800 0 0 1 1 9.500z" fill="#8a8a8a"/><path d="M6 15L13 7l4 8z" fill="#b5b5b5"/><path d="M3 1l15 15" stroke="#1c1c1c" stroke-width="3"/><path d="M3 1l15 15" stroke="#e0e0e0" stroke-width="1.200"/></svg>
    <svg class="ml-5 size-[21px]" viewBox="0 0 21 21" fill="none" stroke="#fff" stroke-width="1.300"><path d="M1 10a9.300 9.300 0 0 1 18-3.500M19.300 1v5.700h-5.500M8.500 19.800a9.300 9.300 0 0 1-6.500-5.500M1.600 20v-5.700h5.500"/><circle cx="15.500" cy="15.500" r="5" fill="#0078d7" stroke="none"/></svg>
    <svg class="ml-[20px] w-5 h-[16px]" viewBox="0 0 20 16" fill="none" stroke="#fff" stroke-width="1.500" stroke-linecap="round"><path d="M1 6a12.500 12.500 0 0 1 18 0M4 9.200a8.500 8.500 0 0 1 12 0M6.900 12.100a4.500 4.500 0 0 1 6.200 0"/><circle cx="10" cy="14" r="1.300" fill="#fff" stroke-width=".6"/></svg>
    <svg class="ml-[10px] w-[20px] h-[16px]" viewBox="0 0 20 16" fill="none" stroke="#fff" stroke-width="1.300" stroke-linejoin="round" stroke-linecap="round"><path d="M.8 5.300h3L8.300 1.300v13.400L3.800 10.700h-3zM10.800 5.500a4 4 0 0 1 0 5M13.200 3.200a7 7 0 0 1 0 9.600"/><path d="M16 1a10.500 10.500 0 0 1 0 14" stroke="#666"/></svg>
    <svg class="ml-[10px] -mt-[3px] w-[21px] h-[18px]" viewBox="0 0 21 18" fill="none" stroke="#fff" stroke-width="1.500"><path d="M10 4.800h5.500a1.800 1.800 0 0 1 1.800 1.800v7.500a1.800 1.800 0 0 1-1.800 1.800H5.500"/><path d="M18 8h2.200v4.500H18z" fill="#fff" stroke="none"/><path d="M6.500 0C8.800 3.500 9.800 6.500 8.500 9.800c-.6 1.300-1.700 2-3.300 2L4 13.200 3.600 16H2l.6-4.200C.7 10.800.3 8.500.8 6.500 1.600 4 4.800 3 6.500 0z" fill="#fff" stroke="#1c1c1c" stroke-width=".6"/></svg>
    <div class="ml-[19px] -mt-px w-[78px] text-right text-[14.500px] leading-5 whitespace-nowrap"><div>12:42 AM</div><div>12/30/2024</div></div>
    <svg class="ml-[10px] w-[19px] h-[20px]" viewBox="0 0 19 20"><path d="M1.500 16v-8c0-4 2.500-6.500 6.500-6.500 4 0 6.500 2.500 6.500 6.500v8h1v1H0v-1zM5.500 18h5a2.500 2 0 0 1-5 0z" fill="#fff"/><path d="M5 8h4l-4 4.500h4M10 7.500h3l-3 4h3" fill="none" stroke="#1c1c1c" stroke-width="1.300"/><path d="M12.500 0H19v7h-6.500z" fill="#1c1c1c"/><path d="M13.500 1.500h3.800l-3.800 4.300h3.800" fill="none" stroke="#fff" stroke-width="1.400"/></svg>
  </div>
</div>
</body>
</html>
